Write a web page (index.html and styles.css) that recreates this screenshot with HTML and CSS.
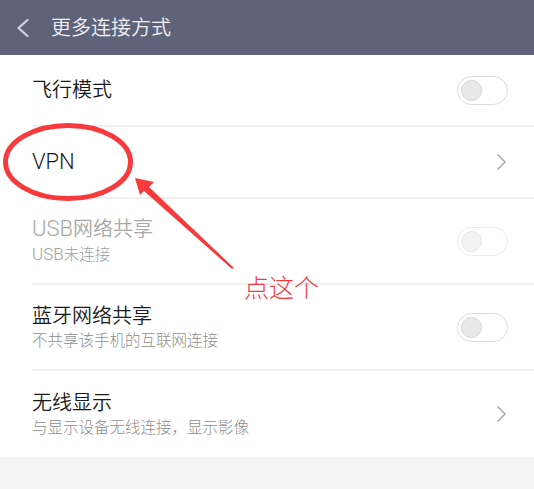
FILE: index.html
```html
<!DOCTYPE html>
<html lang="zh-CN">
<head>
<meta charset="utf-8">
<title>更多连接方式</title>
<link rel="stylesheet" href="styles.css">
</head>
<body>
<div class="page">
  <header class="header">
    <svg class="back" width="14" height="20" viewBox="0 0 14 20"><polyline points="11.5,2 2.5,10 11.5,18" fill="none" stroke="#d3d5de" stroke-width="2.2" stroke-linecap="round" stroke-linejoin="round"/></svg>
    <span class="title">更多连接方式</span>
  </header>
  <div class="list">
    <div class="row short">
      <div class="text"><div class="label">飞行模式</div></div>
      <span class="switch"><span class="knob"></span></span>
    </div>
    <div class="row short">
      <div class="text"><div class="label"><span class="lat">VPN</span></div></div>
      <svg class="chev" width="11" height="18" viewBox="0 0 11 18"><polyline points="1.5,1.5 9,9 1.5,16.5" fill="none" stroke="#a3a3a3" stroke-width="1.4"/></svg>
    </div>
    <div class="row tall disabled">
      <div class="text"><div class="label"><span class="lat">USB</span>网络共享</div><div class="sub"><span class="lat">USB</span>未连接</div></div>
      <span class="switch"><span class="knob"></span></span>
    </div>
    <div class="row tall">
      <div class="text"><div class="label">蓝牙网络共享</div><div class="sub">不共享该手机的互联网连接</div></div>
      <span class="switch"><span class="knob"></span></span>
    </div>
    <div class="row tall last">
      <div class="text"><div class="label">无线显示</div><div class="sub">与显示设备无线连接，显示影像</div></div>
      <svg class="chev" width="11" height="18" viewBox="0 0 11 18"><polyline points="1.5,1.5 9,9 1.5,16.5" fill="none" stroke="#a3a3a3" stroke-width="1.4"/></svg>
    </div>
  </div>
  <svg class="annot" width="534" height="489" viewBox="0 0 534 489">
    <ellipse cx="68" cy="162" rx="62.5" ry="36.5" fill="none" stroke="#f83a3c" stroke-width="5"/>
    <polygon points="135,178 154,182 149,187 234,268 232,269 144,191 140,195" fill="#f83a3c"/>
    <text x="244" y="297" class="note">点这个</text>
  </svg>
</div>
</body>
</html>
```
FILE: styles.css
```css
html, body {
  margin: 0;
  padding: 0;
}
body {
  background: #f4f4f4;
  font-family: Roboto, "Noto Sans CJK SC", sans-serif;
}
.page {
  position: relative;
  width: 534px;
  height: 489px;
  overflow: hidden;
}
.header {
  height: 55px;
  box-sizing: border-box;
  background: #5f6379;
  display: flex;
  align-items: center;
  padding-left: 16px;
}
.back {
  display: block;
}
.title {
  margin-left: 21px;
  font-size: 20px;
  font-weight: 350;
  color: #eff0f4;
  line-height: 24px;
}
.list {
  background: #ffffff;
}
.row {
  margin-left: 32px;
  padding-right: 26px;
  box-sizing: border-box;
  display: flex;
  align-items: center;
  border-bottom: 2px solid #efefef;
}
.row.short {
  height: 72px;
}
.row.tall {
  height: 86px;
}
.row.last {
  border-bottom: none;
}
.text {
  flex: 1;
  display: flex;
  flex-direction: column;
}
.label {
  font-size: 20px;
  line-height: 24px;
  font-weight: 350;
  color: #1a1a1a;
}
.label .lat {
  font-size: 22px;
  font-weight: 300;
}
.sub {
  margin-top: 3px;
  font-size: 15.5px;
  line-height: 20px;
  font-weight: 300;
  color: #8e8e8e;
}
.sub .lat {
  font-size: 17px;
}
.disabled .label {
  color: #a8a8a8;
}
.disabled .sub {
  color: #a0a0a0;
}
.switch {
  width: 51px;
  height: 29px;
  box-sizing: border-box;
  border: 1px solid #dcdcdc;
  border-radius: 15px;
  background: #ffffff;
  display: flex;
  align-items: center;
  padding-left: 3px;
}
.knob {
  width: 21px;
  height: 21px;
  box-sizing: border-box;
  border-radius: 50%;
  background: #e9e9e9;
  border: 1px solid #d4d4d4;
}
.disabled .switch {
  border-color: #ececec;
}
.disabled .knob {
  background: #f2f2f2;
  border-color: #e6e6e6;
}
.chev {
  display: block;
  margin-right: 1px;
}
.annot {
  position: absolute;
  left: 0;
  top: 0;
  pointer-events: none;
}
.note {
  font-family: "Noto Sans CJK SC", sans-serif;
  font-size: 25px;
  font-weight: 300;
  fill: #f8383c;
}
```
